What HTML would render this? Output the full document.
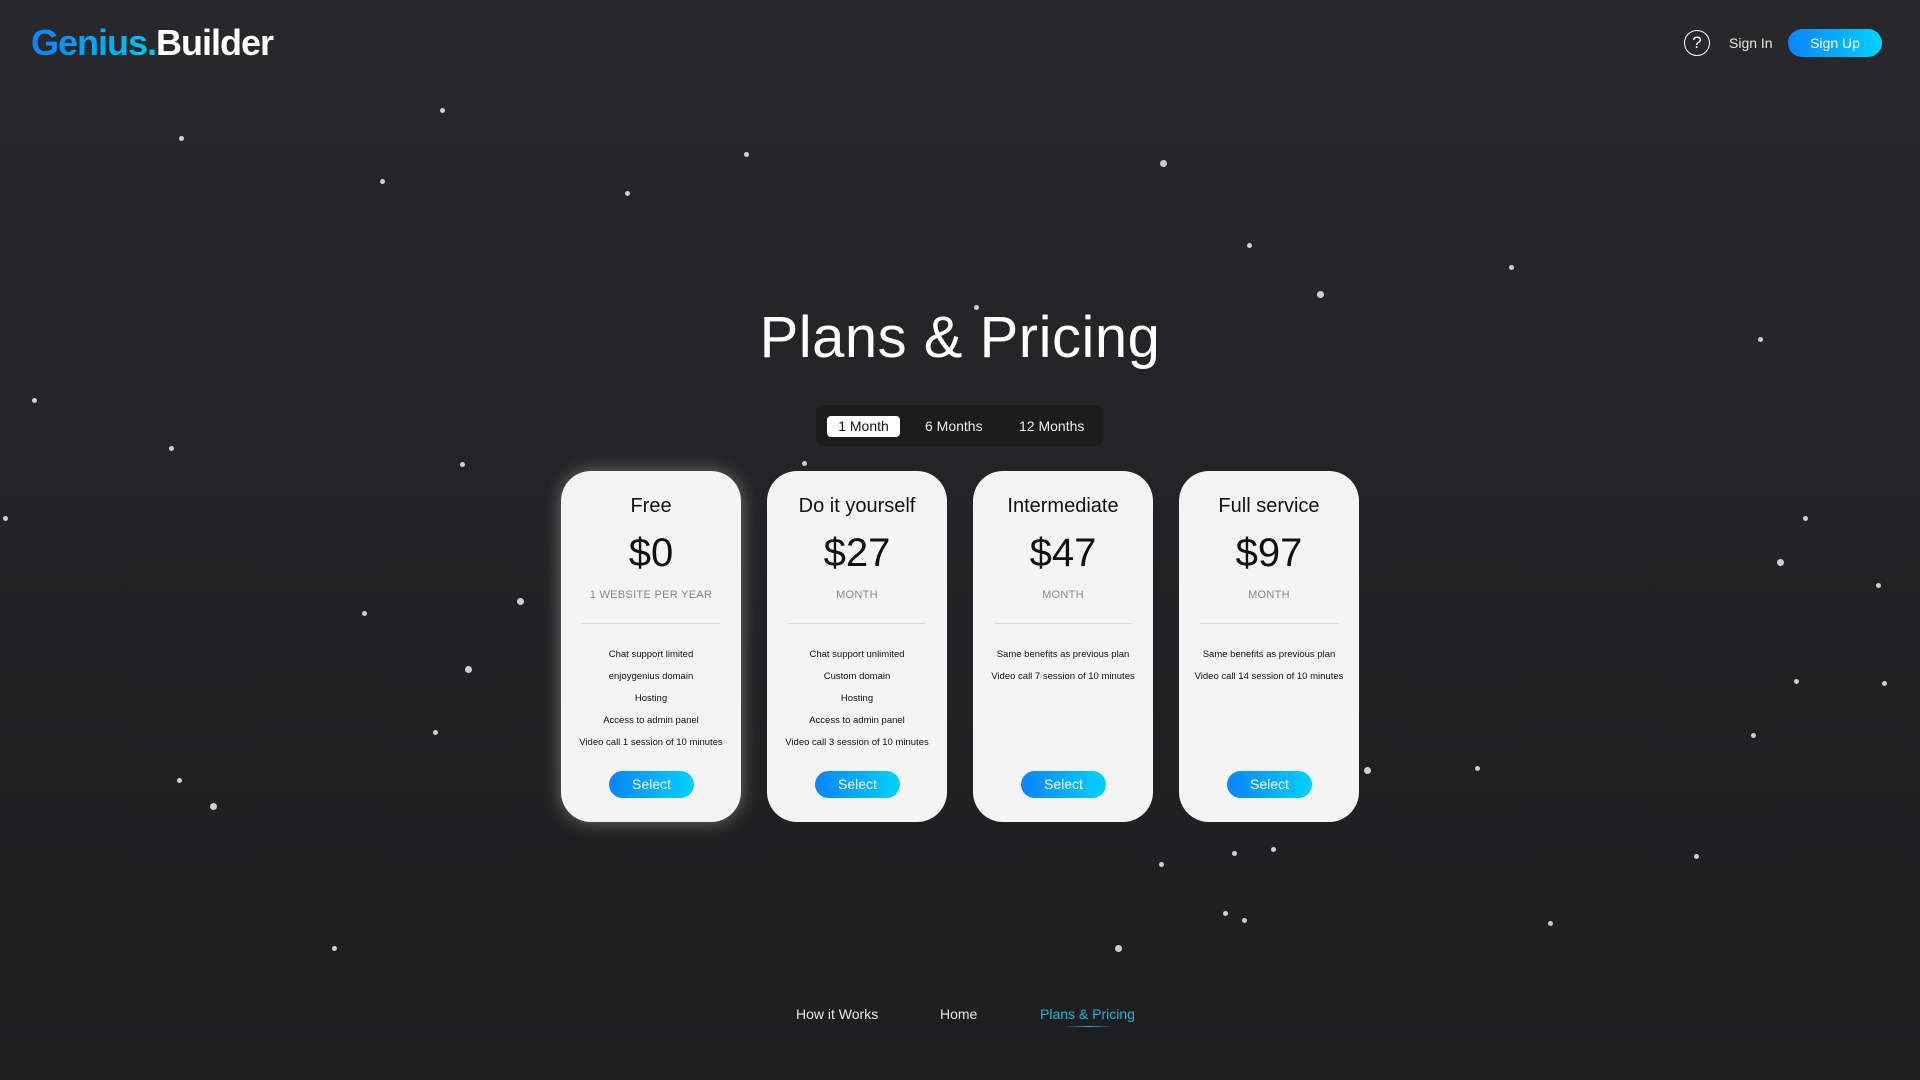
<!DOCTYPE html>
<html><head><meta charset="utf-8"><style>
*{margin:0;padding:0;box-sizing:border-box}
body{width:1920px;height:1080px;overflow:hidden;background:linear-gradient(180deg,#28282a 0%,#232325 50%,#1e1e1f 100%);font-family:"Liberation Sans",sans-serif;position:relative;color:#fff}
.s{position:absolute;width:5px;height:5px;border-radius:50%;background:#cfcfd2}
.b{width:7px;height:7px}
.logo{position:absolute;left:31px;top:22px;font-size:36px;font-weight:bold;letter-spacing:-1px}
.logo .g{background:linear-gradient(90deg,#0a84ff,#00c6f0);-webkit-background-clip:text;color:transparent}
.help{position:absolute;left:1684px;top:30px;width:26px;height:26px;border:1.6px solid #fff;border-radius:50%;font-size:17px;text-align:center;line-height:23px}
.signin{position:absolute;left:1729px;top:35px;font-size:14px;color:#e8e8e8}
.signup{position:absolute;left:1788px;top:29px;width:94px;height:28px;border-radius:14px;background:linear-gradient(90deg,#0a84ff,#00d2ff);font-size:14px;text-align:center;line-height:28px}
h1{position:absolute;left:0;width:1920px;top:304px;text-align:center;font-size:58px;font-weight:normal;letter-spacing:0.5px}
.tog{position:absolute;left:816px;top:405px;width:287px;height:41px;border-radius:8px;background:#1c1c1d}
.tog span{position:absolute;top:11px;font-size:14px;height:21px;line-height:21px;color:#eee}
.tog .a{left:11px;width:73px;background:#fff;color:#111;border-radius:4px;text-align:center}
.card{position:absolute;top:471px;width:180px;height:351px;background:#f4f4f4;border-radius:30px;color:#111;text-align:center}
.card.f{box-shadow:0 0 18px rgba(255,255,255,.35)}
.card .t{position:absolute;top:24px;width:100%;font-size:20px}
.card .p{position:absolute;top:60px;width:100%;font-size:40px}
.card .u{position:absolute;top:118px;width:100%;font-size:11px;color:#888;letter-spacing:.3px}
.card .d{position:absolute;top:152px;left:21px;right:21px;border-top:1px solid #d8d8d8}
.card .fl{position:absolute;top:173px;width:100%;font-size:9.5px;line-height:22px}
.card .btn{position:absolute;left:48px;top:300px;width:85px;height:27px;border-radius:14px;background:linear-gradient(90deg,#0a84ff,#00d2ff);color:#fff;font-size:14px;line-height:27px}
.nav{position:absolute;top:1006px;font-size:14px;color:#e8e8e8}
</style></head><body>
<div class="s" style="left:179px;top:136px"></div><div class="s" style="left:440px;top:108px"></div><div class="s" style="left:380px;top:179px"></div><div class="s" style="left:625px;top:191px"></div><div class="s" style="left:744px;top:152px"></div><div class="s b" style="left:1160px;top:160px"></div><div class="s" style="left:1247px;top:243px"></div><div class="s b" style="left:1317px;top:291px"></div><div class="s" style="left:1509px;top:265px"></div><div class="s" style="left:974px;top:305px"></div><div class="s" style="left:1758px;top:337px"></div><div class="s" style="left:32px;top:398px"></div><div class="s" style="left:169px;top:446px"></div><div class="s" style="left:460px;top:462px"></div><div class="s" style="left:3px;top:516px"></div><div class="s" style="left:802px;top:461px"></div><div class="s b" style="left:517px;top:598px"></div><div class="s" style="left:362px;top:611px"></div><div class="s b" style="left:465px;top:666px"></div><div class="s" style="left:433px;top:730px"></div><div class="s" style="left:177px;top:778px"></div><div class="s b" style="left:210px;top:803px"></div><div class="s" style="left:332px;top:946px"></div><div class="s" style="left:1803px;top:516px"></div><div class="s b" style="left:1777px;top:559px"></div><div class="s" style="left:1876px;top:583px"></div><div class="s" style="left:1794px;top:679px"></div><div class="s" style="left:1882px;top:681px"></div><div class="s" style="left:1751px;top:733px"></div><div class="s b" style="left:1364px;top:767px"></div><div class="s" style="left:1475px;top:766px"></div><div class="s" style="left:1694px;top:854px"></div><div class="s" style="left:1232px;top:851px"></div><div class="s" style="left:1271px;top:847px"></div><div class="s" style="left:1159px;top:862px"></div><div class="s" style="left:1223px;top:911px"></div><div class="s" style="left:1242px;top:918px"></div><div class="s b" style="left:1115px;top:945px"></div><div class="s" style="left:1548px;top:921px"></div>

<div class="logo"><span class="g">Genius.</span>Builder</div>
<div class="help">?</div>
<div class="signin">Sign In</div>
<div class="signup">Sign Up</div>
<h1>Plans &amp; Pricing</h1>
<div class="tog"><span class="a">1 Month</span><span style="left:109px">6 Months</span><span style="left:203px">12 Months</span></div>

<div class="card f" style="left:561px"><div class="t">Free</div><div class="p">$0</div><div class="u">1 WEBSITE PER YEAR</div><div class="d"></div><div class="fl">Chat support limited<br>enjoygenius domain<br>Hosting<br>Access to admin panel<br>Video call 1 session of 10 minutes</div><div class="btn">Select</div></div>
<div class="card" style="left:767px"><div class="t">Do it yourself</div><div class="p">$27</div><div class="u">MONTH</div><div class="d"></div><div class="fl">Chat support unlimited<br>Custom domain<br>Hosting<br>Access to admin panel<br>Video call 3 session of 10 minutes</div><div class="btn">Select</div></div>
<div class="card" style="left:973px"><div class="t">Intermediate</div><div class="p">$47</div><div class="u">MONTH</div><div class="d"></div><div class="fl">Same benefits as previous plan<br>Video call 7 session of 10 minutes</div><div class="btn">Select</div></div>
<div class="card" style="left:1179px"><div class="t">Full service</div><div class="p">$97</div><div class="u">MONTH</div><div class="d"></div><div class="fl">Same benefits as previous plan<br>Video call 14 session of 10 minutes</div><div class="btn">Select</div></div>

<div class="nav" style="left:796px">How it Works</div>
<div class="nav" style="left:940px">Home</div>
<div class="nav" style="left:1040px;color:#18b6e0">Plans &amp; Pricing</div>
<div style="position:absolute;left:1064px;top:1026px;width:50px;height:1px;background:linear-gradient(90deg,transparent,#18b6e0,transparent)"></div>
</body></html>
